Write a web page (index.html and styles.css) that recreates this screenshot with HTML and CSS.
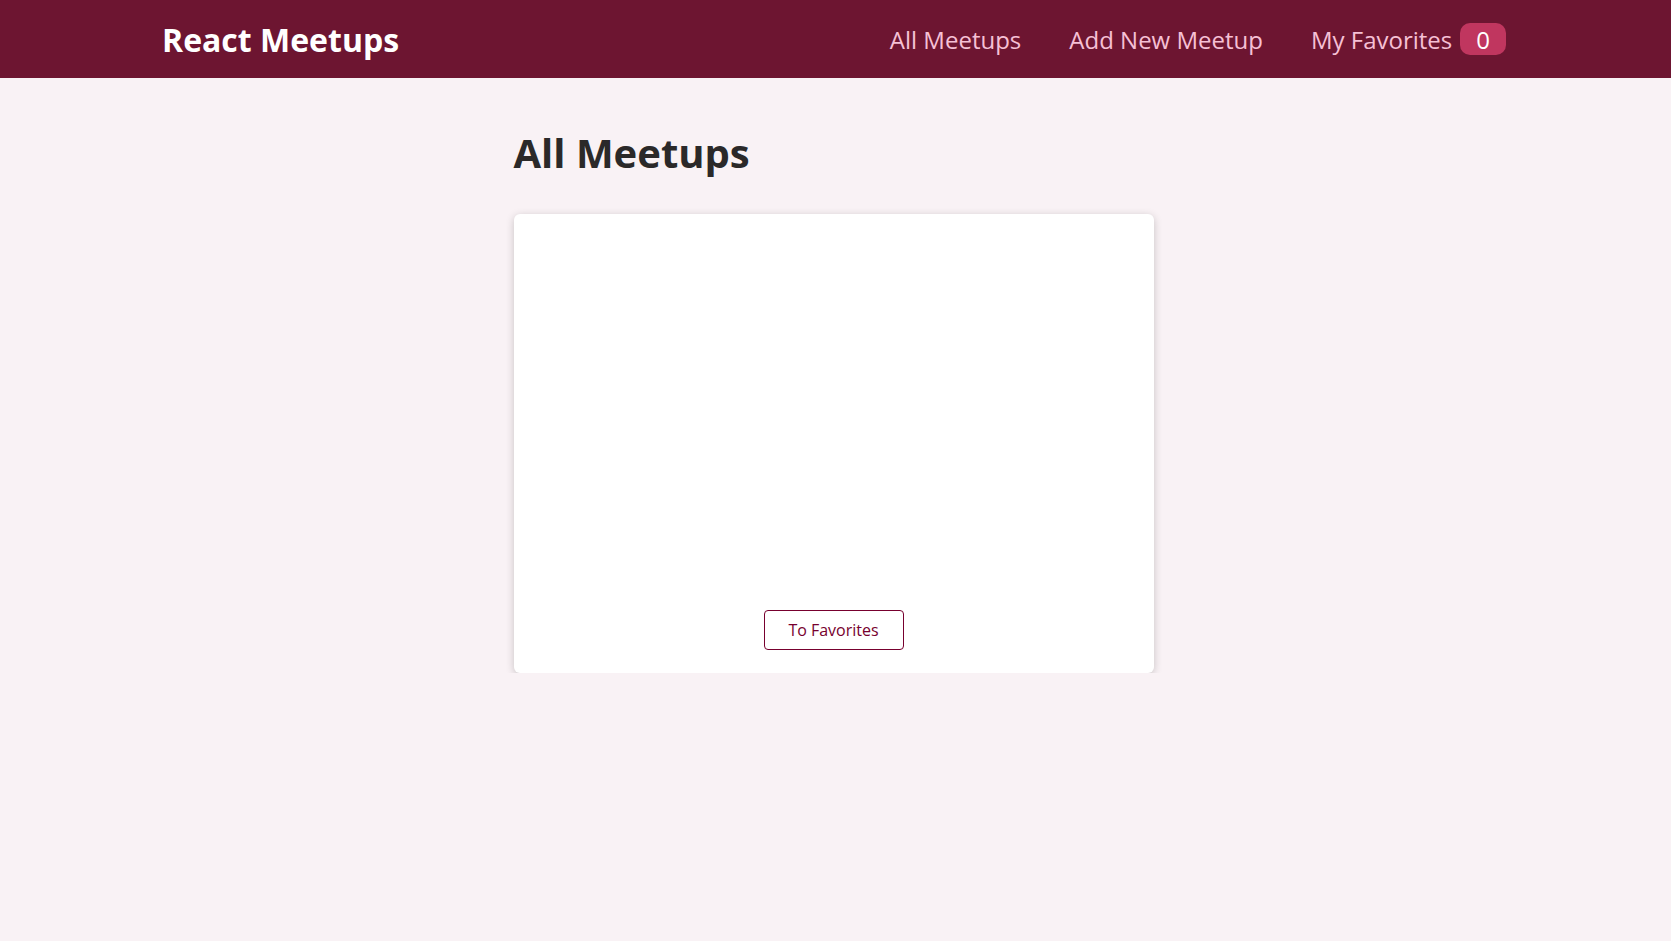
FILE: index.html
```html
<!DOCTYPE html>
<html lang="en">
<head>
<meta charset="utf-8">
<title>React Meetups</title>
<link rel="stylesheet" href="styles.css">
</head>
<body>
<header class="header">
  <div class="logo">React Meetups</div>
  <nav>
    <ul class="nav-list">
      <li><a href="#">All Meetups</a></li>
      <li><a href="#">Add New Meetup</a></li>
      <li><a href="#">My Favorites<span class="badge">0</span></a></li>
    </ul>
  </nav>
</header>
<main class="main">
  <h1 class="title">All Meetups</h1>
  <ul class="meetup-list">
    <li class="card">
      <div class="card-body"></div>
      <div class="actions">
        <button class="fav-btn">To Favorites</button>
      </div>
    </li>
  </ul>
</main>
</body>
</html>
```
FILE: styles.css
```css
* { box-sizing: border-box; }
html, body {
  margin: 0;
  font-family: "Open Sans", "Noto Sans", sans-serif;
  background: #f9f2f5;
  color: #2b2929;
}
.header {
  height: 78px;
  background: #6d1531;
  display: flex;
  align-items: center;
  justify-content: space-between;
  padding: 0 165px 0 162px;
}
.logo {
  color: #ffffff;
  font-size: 32px;
  font-weight: 700;
}
.nav-list {
  list-style: none;
  margin: 0;
  padding: 0;
  display: flex;
  align-items: center;
  gap: 48px;
}
.nav-list a {
  text-decoration: none;
  color: #f6c0d5;
  font-size: 24px;
  display: flex;
  align-items: center;
}
.badge {
  background: #c0365f;
  color: #ffffff;
  border-radius: 10px;
  padding: 0 16px;
  margin-left: 8px;
  height: 32px;
  display: inline-flex;
  align-items: center;
}
.main {
  width: 640px;
  margin-left: calc(50% - 322px);
  padding-top: 47px;
}
.title {
  font-size: 40px;
  font-weight: 700;
  margin: 0 0 34px;
  color: #2b2929;
}
.meetup-list {
  list-style: none;
  margin: 0;
  padding: 0;
}
.card {
  background: #ffffff;
  border-radius: 6px;
  box-shadow: 0 2px 8px rgba(0, 0, 0, 0.2);
  height: 459px;
  display: flex;
  flex-direction: column;
}
.card-body { flex: 1; }
.actions {
  display: flex;
  justify-content: center;
  padding-bottom: 23px;
}
.fav-btn {
  font-family: inherit;
  font-size: 16px;
  color: #77002e;
  background: transparent;
  border: 1px solid #77002e;
  border-radius: 4px;
  width: 140px;
  height: 40px;
  cursor: pointer;
}
```
